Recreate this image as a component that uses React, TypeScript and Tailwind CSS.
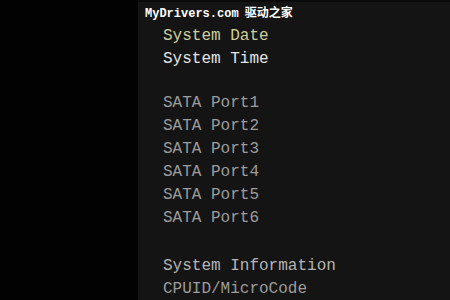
import React from 'react';

const sataPorts = ['SATA Port1', 'SATA Port2', 'SATA Port3', 'SATA Port4', 'SATA Port5', 'SATA Port6'];

export default function App() {
  return (
    <div className="flex h-[300px] w-[450px] overflow-hidden bg-black">
      <div className="w-[138px] shrink-0 bg-[#020202]" />
      <div
        className="flex-1 border-t-2 border-[#0a0a0a] bg-[#141414]"
        style={{ fontFamily: '"Liberation Mono", "DejaVu Sans Mono", monospace' }}
      >
        <div
          className="pl-[7px] pt-[5px] text-[12px] font-bold leading-[14px] text-white"
          style={{ fontFamily: '"Liberation Mono", "Noto Sans CJK SC", monospace' }}
        >
          MyDrivers.com<span className="ml-[6px]">驱动之家</span>
        </div>

        <div className="mt-[4px] pl-[25px] text-[16px] leading-[23px]">
          <div className="text-[#cfcf9c]">System Date</div>
          <div className="text-[#e4e4e4]">System Time</div>

          <div className="h-[21px]" />
          {sataPorts.map(port => (
            <div key={port} className="text-[#9c9c9c]">
              {port}
            </div>
          ))}

          <div className="h-[25px]" />
          <div className="text-[#b4b4b4]">System Information</div>
          <div className="text-[#9c9c9c]">CPUID/MicroCode</div>
        </div>
      </div>
    </div>
  );
}
